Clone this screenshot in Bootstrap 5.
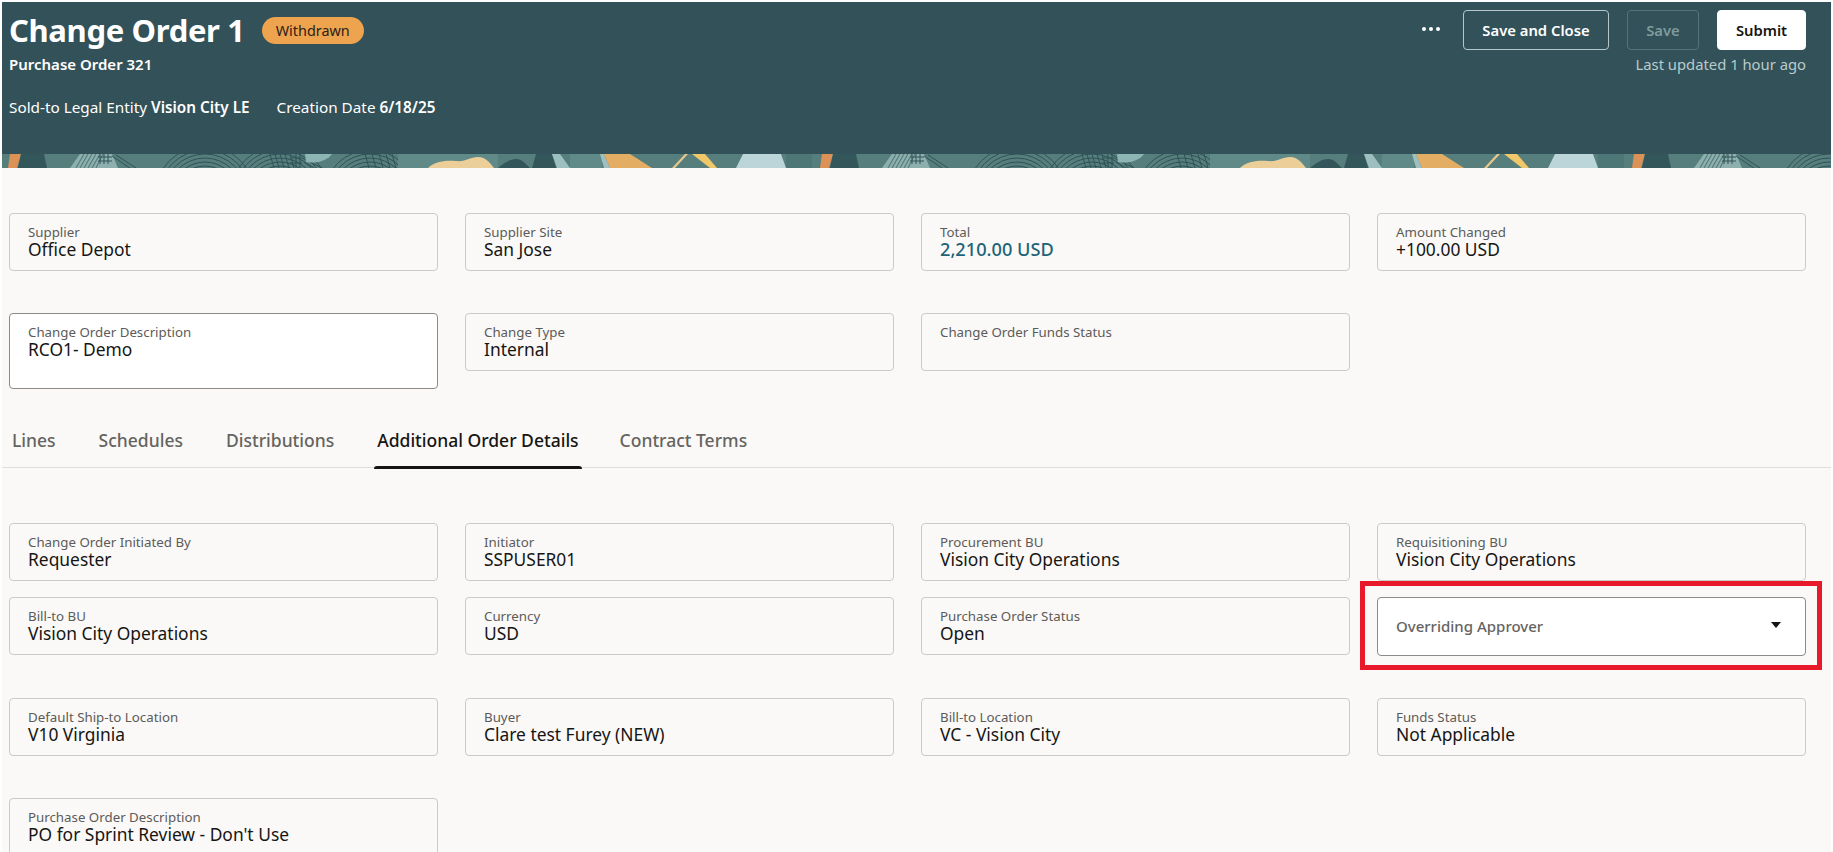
<!DOCTYPE html>
<html lang="en">
<head>
<meta charset="utf-8">
<title>Change Order 1</title>
<link href="https://cdn.jsdelivr.net/npm/bootstrap@5.3.0/dist/css/bootstrap.min.css" rel="stylesheet">
<style>
html,body{height:852px;overflow:hidden;background:#fff;}
body{font-family:"Noto Sans","Open Sans",sans-serif;color:#161513;padding-top:2px;}
.page-shell{margin:0 2px;height:850px;overflow:hidden;background:#faf9f7;}
.hero{background:#325158;height:152px;padding:8px 25px 0 7px;color:#fff;}
.hero-title{font-size:31px;font-weight:700;line-height:40px;margin:0;letter-spacing:-.34px;}
.hero-badge{background:#eea44f;color:#2b2118;font-size:14.4px;font-weight:400;border-radius:14px;width:102px;height:27px;line-height:27px;padding:0;margin-left:17px;}
.hero-sub{font-size:15px;font-weight:600;line-height:20px;margin-top:4px;}
.hero-meta{font-size:15.3px;line-height:20px;margin-top:23px;}
.hero-meta b{font-weight:600;}
.hero-meta span+span{margin-left:27px;}
.hero-dots{width:22px;height:40px;margin-right:21px;}
.act-btn{font-size:14.8px;font-weight:600;height:40px;padding:0;border-radius:4px;}
.act-outline{width:146px;color:#fff;border:1px solid #b5c6c8;background:transparent;}
.act-disabled{width:72px;color:#7f9a9d;border:1px solid #56717a;background:transparent;margin-left:18px;}
.act-white{width:89px;color:#161513;background:#fff;border:1px solid #fff;margin-left:18px;}
.hero-updated{font-size:14.8px;color:#b9cbcc;line-height:20px;margin-top:4px;}
.hero-band{display:block;width:100%;height:14px;}
.field-row{--bs-gutter-x:27px;--bs-gutter-y:0;margin-left:-6.5px;margin-right:-6.5px;width:1824px;}
.field-box{height:58px;border:1px solid #cbcac6;border-radius:4px;padding:10px 18px 0;}
.field-label{font-size:13.3px;line-height:16px;color:#5c5b59;}
.field-value{font-size:17.4px;line-height:18px;color:#161513;}
.field-total{color:#1d6478;font-weight:500;font-size:18.2px;}
.field-edit{background:#fff;border-color:#8c8b88;height:76px;}
.field-pick{background:#fff;border:1px solid #8c8b88;border-radius:4px;height:59px;padding:0 24px 0 18px;position:relative;}
.pick-label{font-size:15px;font-weight:500;color:#65645f;}
.pick-caret{width:10px;height:6px;display:block;margin-top:-4px;}
.pick-mark{position:absolute;left:-18px;right:-17px;top:-17px;bottom:-15px;border:5px solid #e8192a;pointer-events:none;}
.gap-a{margin-top:45px;}
.gap-b{margin-top:42px;}
.gap-c{margin-top:16px;}
.gap-d{margin-top:42px;}
.gap-e{margin-top:55px;}
.tab-strip{height:79px;border-bottom:1px solid #dfdedb;padding-left:7px;gap:37px;margin-top:0;}
.tab-item{font-size:17.5px;color:#65645f;padding:0 3px;height:79px;line-height:102px;border-bottom:0;position:relative;font-weight:500;}
.tab-on{color:#161513;margin-right:-2px;}
.tab-on::after{content:"";position:absolute;left:0;right:0;bottom:-1px;height:3px;background:#161513;border-radius:3px 3px 0 0;}
</style>
</head>
<body>
<div class="page-shell">
  <header>
    <div class="hero d-flex justify-content-between">
      <div>
        <div class="d-flex align-items-center">
          <h1 class="hero-title">Change Order 1</h1>
          <span class="badge hero-badge">Withdrawn</span>
        </div>
        <div class="hero-sub">Purchase Order 321</div>
        <div class="hero-meta"><span>Sold-to Legal Entity <b>Vision City LE</b></span><span>Creation Date <b>6/18/25</b></span></div>
      </div>
      <div class="text-end">
        <div class="d-flex align-items-center justify-content-end">
          <svg class="hero-dots" viewBox="0 0 22 40" aria-hidden="true"><circle cx="4" cy="19" r="2" fill="#fff"/><circle cx="11" cy="19" r="2" fill="#fff"/><circle cx="18" cy="19" r="2" fill="#fff"/></svg>
          <button type="button" class="btn act-btn act-outline">Save and Close</button>
          <button type="button" class="btn act-btn act-disabled">Save</button>
          <button type="button" class="btn act-btn act-white">Submit</button>
        </div>
        <div class="hero-updated">Last updated 1 hour ago</div>
      </div>
    </div>
    <svg class="hero-band" aria-hidden="true">
      <defs>
        <pattern id="bandTile" width="812" height="14" patternUnits="userSpaceOnUse" x="-2">
          <rect width="812" height="14" fill="#557e7c"/>
          <polygon points="10,0 21,0 17,14 8,14" fill="#dc9256"/>
          <path d="M21,0H44L47,14H18Z" fill="#33565b"/>
          <polygon points="80,0 112,0 118,14 70,14" fill="#8db0af"/>
          <g stroke="#557e7c" stroke-width="1.2"><path d="M76,14 84,0M80,14 88,0M84,14 92,0M88,14 96,0M92,14 100,0M96,14 103,0"/></g>
          <g fill="none" stroke="#2f5156" stroke-width="1">
            <path d="M100,0V10M104,0V10M108,0V10M98,3H112M98,7H112M112,2 130,14M116,1 136,14"/>
            <circle cx="205" cy="42" r="30"/><circle cx="205" cy="42" r="34"/><circle cx="205" cy="42" r="38"/><circle cx="205" cy="42" r="42"/><circle cx="205" cy="42" r="46"/><circle cx="205" cy="42" r="50"/>
            <circle cx="280" cy="42" r="30"/><circle cx="280" cy="42" r="34"/><circle cx="280" cy="42" r="38"/><circle cx="280" cy="42" r="42"/><circle cx="280" cy="42" r="46"/><circle cx="280" cy="42" r="50"/>
            <path d="M270,0 274,14M275,0 279,14M280,0 284,14M285,0 289,14M290,0 294,14M296,0V14M300,0V14M290,4H302M290,9H302M302,4 322,14M304,8 314,14"/>
            <circle cx="370" cy="42" r="30"/><circle cx="370" cy="42" r="34"/><circle cx="370" cy="42" r="38"/><circle cx="370" cy="42" r="42"/><circle cx="370" cy="42" r="46"/>
            <path d="M365,0 369,14M372,0 376,14M379,0 383,14M386,0 390,14M392,0 396,14"/>
          </g>
          <path d="M305,0H332C328,6 318,10 306,8Z" fill="#8db5b4"/>
          <rect x="398" y="0" width="100" height="14" fill="#5f8a88"/>
          <path d="M428,14C434,8 444,6 456,7C466,8 470,3 478,3C486,3 490,9 494,14Z" fill="#eccf98"/>
          <path d="M498,14C504,9 510,5 516,5C522,5 526,10 530,14Z" fill="#33565b"/>
          <polygon points="536,0 552,0 556,14 532,14" fill="#33565b"/>
          <polygon points="552,0 560,0 570,14 557,14" fill="#9dbfc0"/>
          <rect x="570" y="0" width="32" height="14" fill="#5f8a88"/>
          <polygon points="600,0 604,0 610,14 604,14" fill="#9dbfc0"/>
          <polygon points="604,0 630,0 652,14 610,14" fill="#e3ae63"/>
          <polygon points="685,0 688,0 675,14 672,14" fill="#eac78a"/>
          <polygon points="692,0 705,0 717,14 710,14" fill="#f0c869"/>
          <polygon points="743,0 781,0 786,14 736,14" fill="#bcd5d8"/>
          <rect x="786" y="0" width="26" height="14" fill="#4d7677"/>
        </pattern>
      </defs>
      <rect width="100%" height="14" fill="url(#bandTile)"/>
    </svg>
  </header>
  <main>
    <div class="row field-row gap-a">
      <div class="col-3"><div class="field-box"><div class="field-label">Supplier</div><div class="field-value">Office Depot</div></div></div>
      <div class="col-3"><div class="field-box"><div class="field-label">Supplier Site</div><div class="field-value">San Jose</div></div></div>
      <div class="col-3"><div class="field-box"><div class="field-label">Total</div><div class="field-value field-total">2,210.00 USD</div></div></div>
      <div class="col-3"><div class="field-box"><div class="field-label">Amount Changed</div><div class="field-value">+100.00 USD</div></div></div>
    </div>
    <div class="row field-row gap-b">
      <div class="col-3"><div class="field-box field-edit"><div class="field-label">Change Order Description</div><div class="field-value">RCO1- Demo</div></div></div>
      <div class="col-3"><div class="field-box"><div class="field-label">Change Type</div><div class="field-value">Internal</div></div></div>
      <div class="col-3"><div class="field-box"><div class="field-label">Change Order Funds Status</div></div></div>
    </div>
    <nav class="nav tab-strip d-flex">
      <a class="tab-item text-decoration-none" href="#">Lines</a>
      <a class="tab-item text-decoration-none" href="#">Schedules</a>
      <a class="tab-item text-decoration-none" href="#">Distributions</a>
      <a class="tab-item tab-on text-decoration-none" href="#">Additional Order Details</a>
      <a class="tab-item text-decoration-none" href="#">Contract Terms</a>
    </nav>
    <div class="row field-row gap-e">
      <div class="col-3"><div class="field-box"><div class="field-label">Change Order Initiated By</div><div class="field-value">Requester</div></div></div>
      <div class="col-3"><div class="field-box"><div class="field-label">Initiator</div><div class="field-value">SSPUSER01</div></div></div>
      <div class="col-3"><div class="field-box"><div class="field-label">Procurement BU</div><div class="field-value">Vision City Operations</div></div></div>
      <div class="col-3"><div class="field-box"><div class="field-label">Requisitioning BU</div><div class="field-value">Vision City Operations</div></div></div>
    </div>
    <div class="row field-row gap-c">
      <div class="col-3"><div class="field-box"><div class="field-label">Bill-to BU</div><div class="field-value">Vision City Operations</div></div></div>
      <div class="col-3"><div class="field-box"><div class="field-label">Currency</div><div class="field-value">USD</div></div></div>
      <div class="col-3"><div class="field-box"><div class="field-label">Purchase Order Status</div><div class="field-value">Open</div></div></div>
      <div class="col-3"><div class="field-pick d-flex align-items-center justify-content-between"><span class="pick-label">Overriding Approver</span><svg class="pick-caret" viewBox="0 0 10 6" aria-hidden="true"><path d="M0,0H10L5,6Z" fill="#161513"/></svg><span class="pick-mark"></span></div></div>
    </div>
    <div class="row field-row gap-d">
      <div class="col-3"><div class="field-box"><div class="field-label">Default Ship-to Location</div><div class="field-value">V10 Virginia</div></div></div>
      <div class="col-3"><div class="field-box"><div class="field-label">Buyer</div><div class="field-value">Clare test Furey (NEW)</div></div></div>
      <div class="col-3"><div class="field-box"><div class="field-label">Bill-to Location</div><div class="field-value">VC - Vision City</div></div></div>
      <div class="col-3"><div class="field-box"><div class="field-label">Funds Status</div><div class="field-value">Not Applicable</div></div></div>
    </div>
    <div class="row field-row gap-b">
      <div class="col-3"><div class="field-box"><div class="field-label">Purchase Order Description</div><div class="field-value">PO for Sprint Review - Don't Use</div></div></div>
    </div>
  </main>
</div>
<script src="https://cdn.jsdelivr.net/npm/bootstrap@5.3.0/dist/js/bootstrap.bundle.min.js"></script>
</body>
</html>
